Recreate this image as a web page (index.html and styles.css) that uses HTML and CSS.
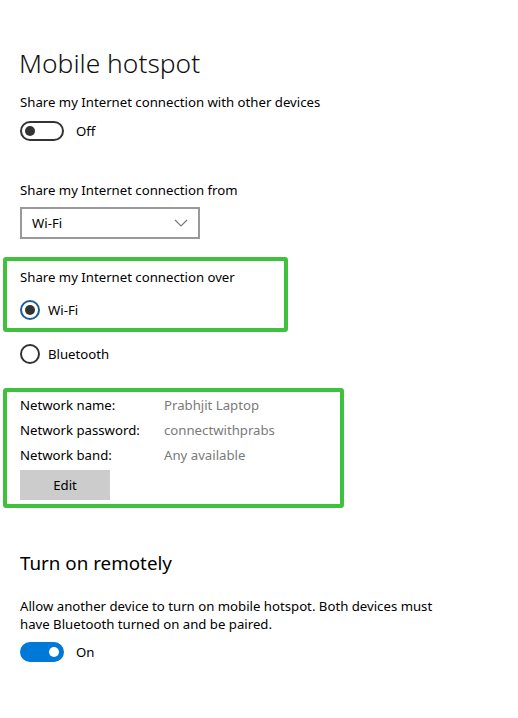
FILE: index.html
```html
<!DOCTYPE html>
<html lang="en">
<head>
    <meta charset="UTF-8">
    <meta name="viewport" content="width=device-width, initial-scale=1.0">
    <title>Mobile hotspot</title>
    <link rel="stylesheet" href="styles.css">
</head>
<body>
    <main class="page">
        <h1 class="title">Mobile hotspot</h1>

        <p class="label label-first">Share my Internet connection with other devices</p>
        <div class="toggle-row">
            <span class="toggle"><span class="thumb"></span></span>
            <span class="toggle-text">Off</span>
        </div>

        <p class="label label-from">Share my Internet connection from</p>
        <div class="select">
            <span>Wi-Fi</span>
            <svg class="chevron" width="14" height="8" viewBox="0 0 14 8">
                <polyline points="1,1 7,7 13,1" fill="none" stroke="#7a7a7a" stroke-width="1.2"/>
            </svg>
        </div>

        <!-- highlighted: share over -->
        <div class="mark mark-over">
            <p class="label">Share my Internet connection over</p>
            <div class="radio-row radio-wifi">
                <span class="radio checked"><span class="dot"></span></span>
                <span>Wi-Fi</span>
            </div>
        </div>

        <div class="radio-row radio-bt">
            <span class="radio"></span>
            <span>Bluetooth</span>
        </div>

        <!-- highlighted: network details -->
        <div class="mark mark-net">
            <div class="net-row">
                <span class="net-key">Network name:</span>
                <span class="net-val">Prabhjit Laptop</span>
            </div>
            <div class="net-row">
                <span class="net-key">Network password:</span>
                <span class="net-val">connectwithprabs</span>
            </div>
            <div class="net-row">
                <span class="net-key">Network band:</span>
                <span class="net-val">Any available</span>
            </div>
            <button class="edit">Edit</button>
        </div>

        <h2 class="subtitle">Turn on remotely</h2>
        <p class="desc">Allow another device to turn on mobile hotspot. Both devices must have Bluetooth turned on and be paired.</p>
        <div class="toggle-row toggle-row-on">
            <span class="toggle on"><span class="thumb"></span></span>
            <span class="toggle-text">On</span>
        </div>
    </main>
</body>
</html>
```

FILE: styles.css
```css
body {
    margin: 0;
    background-color: #ffffff;
    color: #000000;
    font-family: "Noto Sans", "Open Sans", sans-serif;
    font-size: 13.2px;
}
.page {
    padding: 43px 20px 0 20px;
}
.title {
    margin: 0 0 0 -1px;
    font-size: 26.4px;
    font-weight: 300;
    line-height: 40px;
    color: #111;
}
.label {
    margin: 0;
    line-height: 20px;
}
.label-first {
    margin-top: 9px;
}
.label-from {
    margin-top: 39px;
}

/* toggle switch */
.toggle-row {
    display: flex;
    align-items: center;
    gap: 12px;
    margin-top: 9px;
    height: 20px;
}
.toggle-row-on {
    margin-top: 9px;
}
.toggle {
    box-sizing: border-box;
    display: flex;
    align-items: center;
    width: 44px;
    height: 20px;
    border: 2px solid #333;
    border-radius: 10px;
    padding: 0 3px;
}
.toggle .thumb {
    width: 10px;
    height: 10px;
    border-radius: 50%;
    background-color: #333;
}
.toggle.on {
    background-color: #0078d7;
    border-color: #0078d7;
    justify-content: flex-end;
}
.toggle.on .thumb {
    background-color: #fff;
}

/* dropdown */
.select {
    box-sizing: border-box;
    display: flex;
    align-items: center;
    justify-content: space-between;
    width: 180px;
    height: 32px;
    margin-top: 7px;
    padding: 0 10px 0 10px;
    border: 2px solid #999;
}
.chevron {
    display: block;
}

/* green annotation boxes */
.mark {
    border: 4px solid #3ec23e;
    border-radius: 3px;
    margin-left: -17px;
    padding-left: 13px;
}
.mark-over {
    width: 264px;
    margin-top: 18px;
    padding-top: 6px;
    padding-bottom: 8px;
}
.mark-net {
    width: 320px;
    margin-top: 24px;
    padding-top: 3px;
    padding-bottom: 4px;
}

/* radio buttons */
.radio-row {
    display: flex;
    align-items: center;
    gap: 8px;
    height: 20px;
}
.radio-wifi {
    margin-top: 13px;
}
.radio-bt {
    margin-top: 12px;
}
.radio {
    box-sizing: border-box;
    display: flex;
    align-items: center;
    justify-content: center;
    width: 20px;
    height: 20px;
    border: 2px solid #333;
    border-radius: 50%;
}
.radio.checked {
    border-color: #1b5c99;
}
.radio .dot {
    width: 10px;
    height: 10px;
    border-radius: 50%;
    background-color: #333;
}

/* network info */
.net-row {
    display: flex;
    line-height: 20px;
    margin-bottom: 5px;
}
.net-key {
    width: 144px;
}
.net-val {
    color: #7a7a7a;
}
.edit {
    display: block;
    width: 90px;
    height: 30px;
    border: none;
    background-color: #cccccc;
    font-family: inherit;
    font-size: 13.2px;
    color: #000;
    padding: 0;
}

.subtitle {
    margin: 41px 0 0 0;
    font-size: 18.8px;
    font-weight: 400;
    line-height: 28px;
}
.desc {
    margin: 20px 0 0 0;
    width: 440px;
    line-height: 18px;
}
```
